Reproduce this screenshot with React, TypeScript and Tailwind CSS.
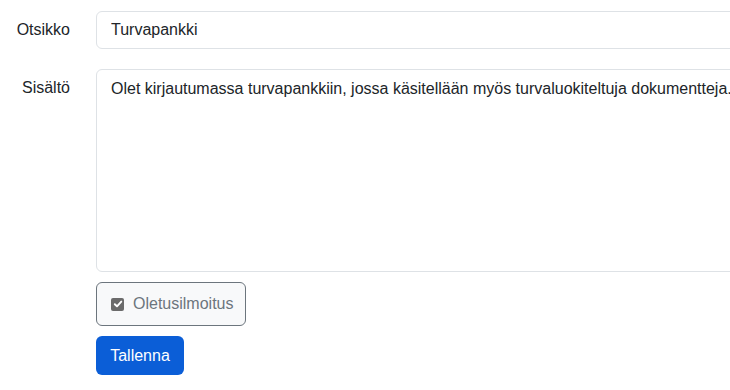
import React from "react";

export default function App() {
  const font = { fontFamily: '"Liberation Sans", Arial, sans-serif' };
  return (
    <div className="w-[730px] h-[390px] overflow-hidden bg-white text-[16px] text-[#212529]" style={font}>
      <div className="w-[840px] pt-[11px] flex flex-col">
        <div className="flex gap-[26px] items-start">
          <label className="w-[70px] text-right pt-[7px] leading-[24px]">Otsikko</label>
          <input
            defaultValue="Turvapankki"
            className="w-[720px] h-[38px] border border-[#dee2e6] rounded-[6px] px-[14px] leading-[24px] outline-none"
            style={font}
          />
        </div>
        <div className="flex gap-[26px] items-start mt-[20px]">
          <label className="w-[70px] text-right pt-[7px] leading-[24px]">Sisältö</label>
          <textarea
            defaultValue="Olet kirjautumassa turvapankkiin, jossa käsitellään myös turvaluokiteltuja dokumentteja."
            className="w-[720px] h-[203px] border border-[#dee2e6] rounded-[6px] px-[14px] py-[7px] leading-[24px] outline-none resize-none"
            style={font}
          />
        </div>
        <div className="ml-[96px] mt-[10px] flex flex-col items-start gap-[10px]">
          <label className="w-[150px] h-[44px] border border-[#6c757d] rounded-[6px] bg-[#f8f9fa] flex items-center pl-[14px] gap-[9px] text-[#6c757d]">
            <span className="w-[13px] h-[13px] rounded-[2px] bg-[#6b6b6b] flex items-center justify-center">
              <svg width="10" height="10" viewBox="0 0 10 10">
                <path d="M1.8 5.2 L4 7.3 L8.3 2.6" stroke="white" strokeWidth="1.9" fill="none" strokeLinecap="round" strokeLinejoin="round" />
              </svg>
            </span>
            <span className="leading-[24px]">Oletusilmoitus</span>
          </label>
          <button className="w-[88px] h-[39px] rounded-[6px] bg-[#0b5ed7] text-white leading-[24px] flex items-center justify-center">
            Tallenna
          </button>
        </div>
      </div>
    </div>
  );
}
